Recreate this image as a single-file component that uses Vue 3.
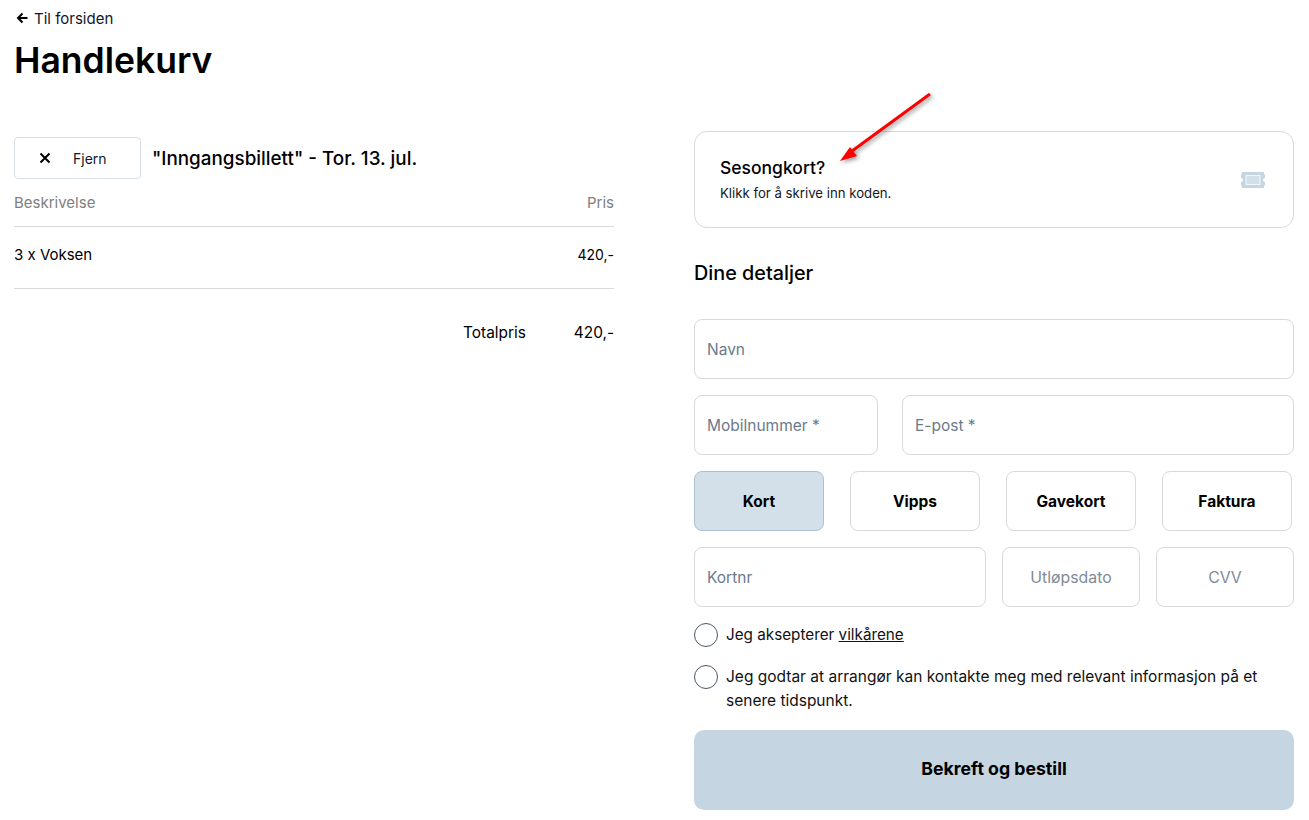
<script setup>
const methods = [
  { name: 'Kort', active: true },
  { name: 'Vipps', active: false },
  { name: 'Gavekort', active: false },
  { name: 'Faktura', active: false },
]
</script>

<template>
  <div class="page">
    <a class="back">
      <svg width="12" height="12" viewBox="0 0 12 12" class="back-icon"><path d="M11.500 6H2M6.500 1.500 2 6l4.500 4.500" fill="none" stroke="#000" stroke-width="2"/></svg>
      <span>Til forsiden</span>
    </a>
    <h1 class="title">Handlekurv</h1>
    <div class="columns">
      <section class="left">
        <div class="ticket-head">
          <button class="remove">
            <svg width="12" height="12" viewBox="0 0 12 12"><path d="M1.500 1.500l9 9M10.500 1.500l-9 9" stroke="#000" stroke-width="2" fill="none"/></svg>
            <span>Fjern</span>
          </button>
          <h2 class="ticket-title">"Inngangsbillett" - Tor. 13. jul.</h2>
        </div>
        <div class="row head"><span>Beskrivelse</span><span>Pris</span></div>
        <div class="row item"><span>3 x Voksen</span><span class="small">420,-</span></div>
        <div class="total"><span>Totalpris</span><span>420,-</span></div>
      </section>
      <section class="right">
        <div class="season">
          <div class="season-text">
            <div class="season-title">Sesongkort?</div>
            <div class="season-sub">Klikk for å skrive inn koden.</div>
          </div>
          <svg class="ticket-icon" width="24" height="16" viewBox="0 0 24 16">
            <path fill="#c5d5e1" d="M1 0h22v1.500a1 1 0 0 0 1 1V6a2 2 0 0 0 0 4v3.500a1 1 0 0 0-1 1V16H1v-1.500a1 1 0 0 0-1-1V10a2 2 0 0 0 0-4V2.500a1 1 0 0 0 1-1z"/>
            <rect x="5" y="3.500" width="14" height="9" fill="#d3e0e9" stroke="#f4f7f9"/>
          </svg>
        </div>
        <h2 class="details">Dine detaljer</h2>
        <div class="field full">Navn</div>
        <div class="line contact">
          <div class="field mobile">Mobilnummer *</div>
          <div class="field grow">E-post *</div>
        </div>
        <div class="line methods">
          <button v-for="m in methods" :key="m.name" class="method" :class="{ active: m.active }">{{ m.name }}</button>
        </div>
        <div class="line card">
          <div class="field grow">Kortnr</div>
          <div class="field short">Utløpsdato</div>
          <div class="field short">CVV</div>
        </div>
        <div class="check first"><span class="circle"></span><span class="check-text">Jeg aksepterer <u>vilkårene</u></span></div>
        <div class="check second"><span class="circle"></span><span class="check-text">Jeg godtar at arrangør kan kontakte meg med relevant informasjon på et senere tidspunkt.</span></div>
        <button class="submit">Bekreft og bestill</button>
      </section>
    </div>
    <svg class="annotation" width="110" height="80" viewBox="0 0 110 80">
      <defs>
        <filter id="sh" x="-20%" y="-20%" width="150%" height="150%"><feDropShadow dx="2" dy="2" stdDeviation="2" flood-color="#000" flood-opacity=".4"/></filter>
      </defs>
      <g filter="url(#sh)">
        <path d="M100 4 22 61" stroke="#f00" stroke-width="3" fill="none"/>
        <path d="M10 71 20 57 27 66z" fill="#f00"/>
      </g>
    </svg>
  </div>
</template>

<style>
html, body { margin: 0; background: #fff; }
</style>

<style scoped>
.page { position: relative; width: 1309px; height: 820px; overflow: hidden; box-sizing: border-box; padding: 8px 15px 0 14px; font-family: Inter, "Liberation Sans", sans-serif; color: #000; font-size: 15px; }
.back { display: flex; align-items: center; gap: 6px; height: 20px; font-size: 15px; color: #111827; }
.back-icon { margin-left: 2px; }
.title { margin: 12px 0 0; font-size: 35.500px; line-height: 42px; font-weight: 600; }
.columns { display: flex; gap: 80px; margin-top: 49px; }
.left, .right { width: 600px; flex: none; }
.left { padding-top: 6px; }
.ticket-head { display: flex; align-items: center; gap: 11px; }
.remove { width: 127px; height: 42px; box-sizing: border-box; border: 1px solid #d3e0e9; border-radius: 4px; background: #fff; display: flex; align-items: center; padding: 0 0 0 24px; gap: 22px; font: inherit; font-size: 14px; color: #111827; }
.ticket-title { margin: 2px 0 0; font-size: 18.850px; font-weight: 500; line-height: 28px; }
.row { display: flex; justify-content: space-between; }
.head { color: #808080; font-size: 15px; height: 48px; box-sizing: border-box; padding-top: 15px; line-height: 18px; border-bottom: 1px solid #d9d9d9; }
.item { height: 62px; box-sizing: border-box; padding-bottom: 7px; align-items: center; border-bottom: 1px solid #d9d9d9; font-size: 15px; }
.small { font-size: 14px; }
.total { display: flex; justify-content: flex-end; gap: 48px; margin-top: 34px; line-height: 20px; font-size: 15.400px; }
.season { height: 97px; box-sizing: border-box; border: 1px solid #d9d9d9; border-radius: 13px; display: flex; align-items: center; justify-content: space-between; padding: 0 28px 0 25px; }
.season-text { margin-bottom: 2px; }
.season-title { font-size: 17.500px; font-weight: 500; line-height: 24px; }
.season-sub { font-size: 13.200px; line-height: 18px; margin-top: 4px; color: #111827; }
.details { margin: 31px 0 0; font-size: 19.800px; line-height: 28px; font-weight: 500; }
.field { height: 60px; box-sizing: border-box; border: 1px solid #d9d9d9; border-radius: 8px; display: flex; align-items: center; padding: 0 12px; color: #6b7a8a; font-size: 15.500px; }
.full { margin-top: 32px; }
.line { display: flex; margin-top: 16px; }
.contact { gap: 24px; }
.mobile { width: 184px; flex: none; }
.grow { flex: 1; }
.methods { gap: 26px; }
.method { width: 130px; height: 60px; border: 1px solid #d9d9d9; border-radius: 8px; background: #fff; font: inherit; font-size: 15.500px; font-weight: 700; color: #000; }
.method.active { background: #d3e0e9; border-color: #adc0cd; }
.card { gap: 16px; }
.short { width: 138px; flex: none; justify-content: center; padding: 0; color: #808b96; font-size: 15.800px; }
.check { display: flex; gap: 8px; align-items: flex-start; font-size: 15.250px; line-height: 24px; color: #111; }
.first { margin-top: 16px; }
.second { margin-top: 18px; font-size: 15.500px; }
.circle { width: 24px; height: 24px; box-sizing: border-box; border: 1px solid #4b5563; border-radius: 50%; flex: none; }
.submit { display: block; width: 100%; height: 80px; margin-top: 17px; padding: 0 0 3px; border: 0; border-radius: 10px; background: #c5d5e1; font: inherit; font-size: 17.700px; font-weight: 700; color: #000; }
.annotation { position: absolute; left: 830px; top: 90px; pointer-events: none; }
</style>
